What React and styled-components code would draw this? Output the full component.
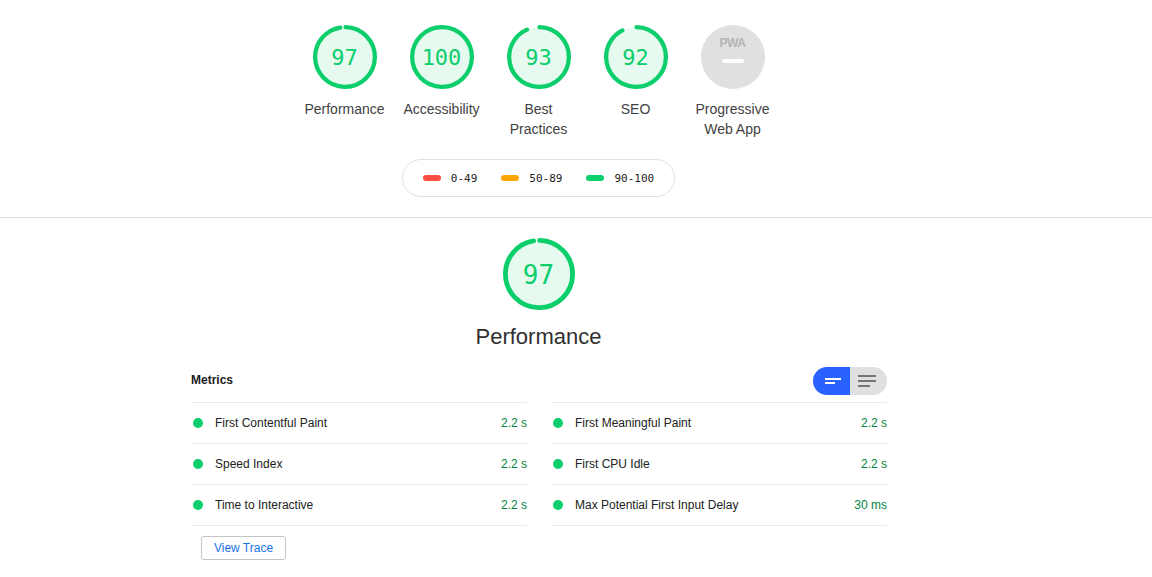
import React from 'react';
import styled, { createGlobalStyle } from 'styled-components';

const GREEN = '#0cce6b';
const MONO = '"DejaVu Sans Mono", "Liberation Mono", monospace';

const GlobalStyle = createGlobalStyle`
  html, body {
    margin: 0;
    padding: 0;
    background: #fff;
    font-family: "Liberation Sans", Arial, sans-serif;
    color: #212121;
  }
`;

const Page = styled.div`
  width: 1152px;
  height: 577px;
  overflow: hidden;
`;

const Centered = styled.div`
  width: 1077px;
  display: flex;
  flex-direction: column;
  align-items: center;
`;

const TopSection = styled.header`
  padding: 25px 0 20px;
  border-bottom: 1px solid #e0e0e0;
`;

const GaugeRow = styled.div`
  display: flex;
  justify-content: center;
`;

const GaugeItem = styled.div`
  width: 97px;
  display: flex;
  flex-direction: column;
  align-items: center;
`;

const GaugeLabel = styled.div`
  width: 81px;
  height: 40px;
  margin-top: 10px;
  font-size: 14px;
  line-height: 20px;
  text-align: center;
  color: #424242;
  white-space: pre-line;
`;

const Dial = styled.div`
  width: ${(p) => p.$size}px;
  height: ${(p) => p.$size}px;
  display: grid;
  place-items: center;
  & > * {
    grid-area: 1 / 1;
  }
`;

const DialNumber = styled.span`
  font-family: ${MONO};
  font-size: ${(p) => p.$fontSize}px;
  padding-top: ${(p) => p.$nudge}px;
  color: ${GREEN};
`;

const PwaBadge = styled.div`
  width: 64px;
  height: 64px;
  border-radius: 50%;
  background: #e0e0e0;
  display: flex;
  flex-direction: column;
  align-items: center;
  padding-top: 12px;
  box-sizing: border-box;
`;

const PwaMark = styled.span`
  font-size: 12px;
  line-height: 12px;
  font-weight: 700;
  letter-spacing: -0.5px;
  color: #b4b4b4;
`;

const PwaDash = styled.span`
  width: 22px;
  height: 4px;
  margin-top: 10px;
  border-radius: 2px;
  background: #fff;
`;

const Legend = styled.div`
  width: 273px;
  height: 38px;
  box-sizing: border-box;
  margin-top: 20px;
  border: 1px solid #e0e0e0;
  border-radius: 19px;
  display: flex;
  align-items: center;
  justify-content: center;
  gap: 24px;
  font-family: ${MONO};
  font-size: 11px;
  color: #212121;
`;

const LegendItem = styled.span`
  display: flex;
  align-items: center;
  gap: 10px;
`;

const LegendPill = styled.i`
  width: 18px;
  height: 6px;
  border-radius: 3px;
  background: ${(p) => p.$color};
`;

const PerfSection = styled.section`
  padding-top: 20px;
`;

const PerfTitle = styled.h1`
  margin: 9px 0 0;
  font-size: 22px;
  line-height: 35px;
  font-weight: 400;
  color: #303030;
`;

const Metrics = styled.div`
  width: 696px;
  margin: 13px 0 0 1px;
`;

const MetricsHeader = styled.div`
  display: flex;
  align-items: center;
  justify-content: space-between;
  margin-bottom: 7px;
`;

const MetricsTitle = styled.h2`
  margin: 0 0 2px;
  font-size: 12px;
  line-height: 26px;
  font-weight: 700;
  color: #212121;
`;

const Toggle = styled.div`
  display: flex;
  width: 74px;
  height: 28px;
  border-radius: 14px;
  overflow: hidden;
`;

const ToggleSide = styled.span`
  flex: 0 0 37px;
  box-sizing: border-box;
  display: flex;
  align-items: center;
  justify-content: ${(p) => (p.$active ? 'flex-end' : 'flex-start')};
  padding: ${(p) => (p.$active ? '0 9px 0 0' : '0 0 0 8px')};
  background: ${(p) => (p.$active ? '#2a62ff' : '#e0e0e0')};
`;

const MetricGrid = styled.div`
  display: grid;
  grid-template-columns: 336px 336px;
  column-gap: 24px;
`;

const MetricColumn = styled.div`
  border-top: 1px solid #ebebeb;
`;

const MetricRow = styled.div`
  height: 40px;
  border-bottom: 1px solid #ebebeb;
  display: flex;
  align-items: center;
  padding-left: 2px;
  font-size: 12px;
`;

const MetricDot = styled.i`
  width: 10px;
  height: 10px;
  border-radius: 50%;
  background: ${GREEN};
  margin-right: 12px;
`;

const MetricName = styled.span`
  flex: 1;
  color: #212121;
`;

const MetricValue = styled.span`
  color: #018642;
`;

const TraceButton = styled.button`
  display: block;
  width: 85px;
  height: 24px;
  margin: 10px 0 0 10px;
  padding: 0;
  background: #fff;
  border: 1px solid #c4c4c4;
  border-radius: 3px;
  font-family: inherit;
  font-size: 12px;
  color: #1a73e8;
`;

function Gauge({ score, size, fontSize, nudge = 0 }) {
  const circumference = 2 * Math.PI * 56;
  return (
    <Dial $size={size}>
      <svg width={size} height={size} viewBox="0 0 120 120">
        <circle cx="60" cy="60" r="56" fill="rgba(12,206,107,0.1)" />
        <circle
          cx="60"
          cy="60"
          r="56"
          fill="none"
          stroke={GREEN}
          strokeWidth="8"
          strokeLinecap="round"
          strokeDasharray={`${(score / 100) * circumference} ${circumference}`}
          transform="rotate(-89 60 60)"
        />
      </svg>
      <DialNumber $fontSize={fontSize} $nudge={nudge}>{score}</DialNumber>
    </Dial>
  );
}

const categories = [
  { score: 97, label: 'Performance' },
  { score: 100, label: 'Accessibility' },
  { score: 93, label: 'Best\nPractices' },
  { score: 92, label: 'SEO' },
];

const legend = [
  { color: '#ff4e42', text: '0-49' },
  { color: '#ffa400', text: '50-89' },
  { color: GREEN, text: '90-100' },
];

const leftMetrics = [
  ['First Contentful Paint', '2.2 s'],
  ['Speed Index', '2.2 s'],
  ['Time to Interactive', '2.2 s'],
];

const rightMetrics = [
  ['First Meaningful Paint', '2.2 s'],
  ['First CPU Idle', '2.2 s'],
  ['Max Potential First Input Delay', '30 ms'],
];

function MetricList({ items }) {
  return (
    <MetricColumn>
      {items.map(([name, value]) => (
        <MetricRow key={name}>
          <MetricDot />
          <MetricName>{name}</MetricName>
          <MetricValue>{value}</MetricValue>
        </MetricRow>
      ))}
    </MetricColumn>
  );
}

export default function App() {
  return (
    <Page>
      <GlobalStyle />
      <TopSection>
        <Centered>
          <GaugeRow>
            {categories.map((c) => (
              <GaugeItem key={c.label}>
                <Gauge score={c.score} size={64} fontSize={22} />
                <GaugeLabel>{c.label}</GaugeLabel>
              </GaugeItem>
            ))}
            <GaugeItem>
              <PwaBadge>
                <PwaMark>PWA</PwaMark>
                <PwaDash />
              </PwaBadge>
              <GaugeLabel>{'Progressive\nWeb App'}</GaugeLabel>
            </GaugeItem>
          </GaugeRow>
          <Legend>
            {legend.map((l) => (
              <LegendItem key={l.text}>
                <LegendPill $color={l.color} />
                {l.text}
              </LegendItem>
            ))}
          </Legend>
        </Centered>
      </TopSection>
      <PerfSection>
        <Centered>
          <Gauge score={97} size={72} fontSize={26} nudge={2} />
          <PerfTitle>Performance</PerfTitle>
          <Metrics>
            <MetricsHeader>
              <MetricsTitle>Metrics</MetricsTitle>
              <Toggle>
                <ToggleSide $active>
                  <svg width="16" height="6" viewBox="0 0 16 6">
                    <path d="M0 0h16v2H0zM0 4h10v2H0z" fill="#fff" />
                  </svg>
                </ToggleSide>
                <ToggleSide>
                  <svg width="18" height="12" viewBox="0 0 18 12">
                    <path d="M0 0h18v2H0zM0 5h18v2H0zM0 10h12v2H0z" fill="#757575" />
                  </svg>
                </ToggleSide>
              </Toggle>
            </MetricsHeader>
            <MetricGrid>
              <MetricList items={leftMetrics} />
              <MetricList items={rightMetrics} />
            </MetricGrid>
            <TraceButton>View Trace</TraceButton>
          </Metrics>
        </Centered>
      </PerfSection>
    </Page>
  );
}
